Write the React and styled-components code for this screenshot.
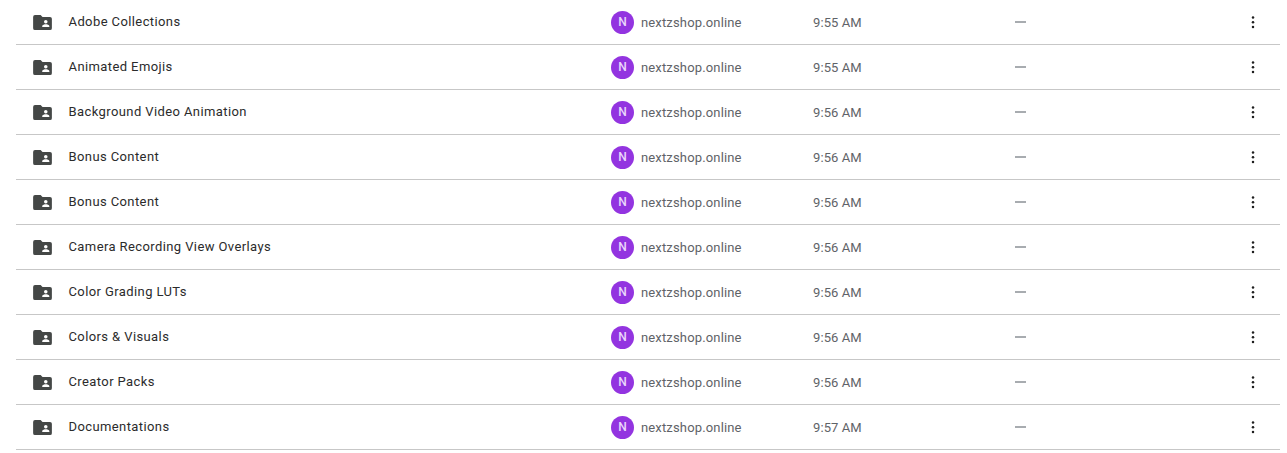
import React from 'react';
import styled, { createGlobalStyle } from "styled-components";

const folders = [
    { name: "Adobe Collections", time: "9:55 AM" },
    { name: "Animated Emojis", time: "9:55 AM" },
    { name: "Background Video Animation", time: "9:56 AM" },
    { name: "Bonus Content", time: "9:56 AM" },
    { name: "Bonus Content", time: "9:56 AM" },
    { name: "Camera Recording View Overlays", time: "9:56 AM" },
    { name: "Color Grading LUTs", time: "9:56 AM" },
    { name: "Colors & Visuals", time: "9:56 AM" },
    { name: "Creator Packs", time: "9:56 AM" },
    { name: "Documentations", time: "9:57 AM" },
];

function SharedFolderIcon() {
    return (
        <svg width="19" height="15" viewBox="0 0 20 16">
            <path
                fill="#444746"
                fillRule="evenodd"
                d="M2 0h6l2 2h8a2 2 0 0 1 2 2v10a2 2 0 0 1-2 2H2a2 2 0 0 1-2-2V2a2 2 0 0 1 2-2zM13.5 5.2a1.9 1.9 0 1 0 0 3.8 1.9 1.9 0 0 0 0-3.8zM9.7 12.8h7.6v-1c0-1.3-2.5-2-3.8-2s-3.8.7-3.8 2z"
            />
        </svg>
    );
}

function MoreIcon() {
    return (
        <svg width="4" height="14" viewBox="0 0 4 14">
            <circle cx="2" cy="2.5" r="1.25" fill="#1f1f1f" />
            <circle cx="2" cy="7.3" r="1.25" fill="#1f1f1f" />
            <circle cx="2" cy="12.1" r="1.25" fill="#1f1f1f" />
        </svg>
    );
}

function App() {
    return (
        <>
            <GlobalStyle />
            <List>
                {folders.map((folder, i) => (
                    <Row key={i}>
                        <NameCell>
                            <SharedFolderIcon />
                            <FileName>{folder.name}</FileName>
                        </NameCell>
                        <OwnerCell>
                            <Avatar>N</Avatar>
                            <OwnerName>nextzshop.online</OwnerName>
                        </OwnerCell>
                        <Muted>{folder.time}</Muted>
                        <Dash />
                        <MoreCell>
                            <MoreIcon />
                        </MoreCell>
                    </Row>
                ))}
            </List>
        </>
    );
}

export default App;

const GlobalStyle = createGlobalStyle`
    body{
        margin: 0;
        background: #fff;
        font-family: Roboto, "Liberation Sans", sans-serif;
        overflow: hidden;
    }
`

const List = styled.div`
    margin: 0 7px 0 16px;
`

const Row = styled.div`
    height: 44px;
    border-bottom: 1px solid #c7c7c7;
    display: grid;
    grid-template-columns: 595px 202px 202px 1fr 29px;
    align-items: center;
`

const NameCell = styled.div`
    display: flex;
    align-items: center;
    padding-left: 17px;
    svg{
        flex: none;
        margin-top: 1px;
    }
`

const FileName = styled.span`
    margin-left: 16.5px;
    margin-bottom: 2px;
    font-size: 13px;
    letter-spacing: 0.4px;
    color: #2b2b2b;
`

const OwnerCell = styled.div`
    display: flex;
    align-items: center;
`

const Avatar = styled.div`
    width: 23px;
    height: 23px;
    border-radius: 50%;
    background: #9334e0;
    color: #ead9fa;
    font-size: 12px;
    font-weight: 500;
    display: flex;
    align-items: center;
    justify-content: center;
`

const OwnerName = styled.span`
    margin-left: 7px;
    font-size: 13px;
    letter-spacing: 0.15px;
    color: #5f6368;
`

const Muted = styled.span`
    font-size: 13px;
    letter-spacing: 0.1px;
    color: #5f6368;
`

const Dash = styled.span`
    width: 11px;
    height: 2px;
    background: #a8acb0;
`

const MoreCell = styled.div`
    display: flex;
    align-items: center;
`
